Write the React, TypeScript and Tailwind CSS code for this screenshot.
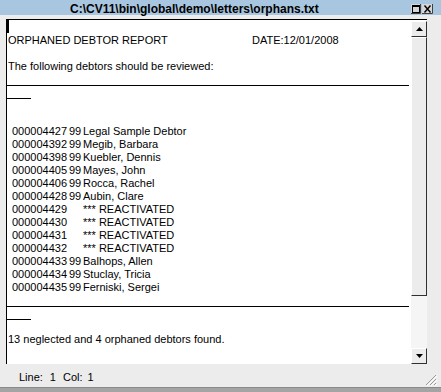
import React from 'react';

const rows: [string, string | null, string][] = [
    ['000004427', '99', 'Legal Sample Debtor'],
    ['000004392', '99', 'Megib, Barbara'],
    ['000004398', '99', 'Kuebler, Dennis'],
    ['000004405', '99', 'Mayes, John'],
    ['000004406', '99', 'Rocca, Rachel'],
    ['000004428', '99', 'Aubin, Clare'],
    ['000004429', null, '*** REACTIVATED'],
    ['000004430', null, '*** REACTIVATED'],
    ['000004431', null, '*** REACTIVATED'],
    ['000004432', null, '*** REACTIVATED'],
    ['000004433', '99', 'Balhops, Allen'],
    ['000004434', '99', 'Stuclay, Tricia'],
    ['000004435', '99', 'Ferniski, Sergei'],
];

const Rule = ({ long }: { long?: boolean }) => (
    <div className="h-[13px] pt-[12px]">
        <div className={`h-px bg-black ${long ? 'w-[402px]' : 'w-[24px]'}`} />
    </div>
);

const Blank = () => <div className="h-[13px]" />;

const Arrow = ({ down }: { down?: boolean }) => (
    <svg width="7" height="4" viewBox="0 0 7 4">
        <path d={down ? 'M0 0H7L3.5 4Z' : 'M0 4H7L3.5 0Z'} fill="#000" />
    </svg>
);

const ScrollButton = ({ down }: { down?: boolean }) => (
    <div className="h-[16px] flex items-center justify-center bg-[#ececec] border border-t-white border-l-white border-r-[#303030] border-b-[#303030]">
        <Arrow down={down} />
    </div>
);

export default function App() {
    return (
        <div className="w-[441px] h-[392px] bg-[#ececec] flex flex-col font-['Liberation_Sans',Arial,sans-serif] text-black overflow-hidden">
            {/* title bar */}
            <div className="h-[15px] shrink-0 bg-[#a8c6df] flex items-start">
                <div className="flex-1 pl-[70px] pt-[1px] text-[12px] leading-[16px] font-bold whitespace-pre">
                    {'C:\\CV11\\bin\\global\\demo\\letters\\orphans.txt'}
                </div>
                <div className="flex gap-[1px] mt-[4px] mr-[8px]">
                    <svg width="10" height="10" viewBox="0 0 10 10">
                        <rect x="0" y="0" width="10" height="10" fill="#d6d6d6" />
                        <rect x="1.5" y="1.5" width="7" height="7" fill="none" stroke="#000" />
                        <rect x="1" y="1" width="8" height="2" fill="#000" />
                        <path d="M0 9.5H9.5V0" stroke="#404040" fill="none" />
                    </svg>
                    <svg width="11" height="10" viewBox="0 0 11 10">
                        <rect x="0" y="0" width="11" height="10" fill="#d6d6d6" />
                        <path d="M2.5 1.5L8.5 8.5M8.5 1.5L2.5 8.5" stroke="#000" strokeWidth="1.4" />
                        <path d="M0 9.5H10.5V0" stroke="#404040" fill="none" />
                    </svg>
                </div>
            </div>

            <div className="h-[4px] shrink-0" />

            {/* editor */}
            <div className="flex shrink-0 ml-[6px] w-[421px] h-[345px] bg-white border-t border-l border-black">
                <div className="relative flex-1 pt-[1px] text-[11px] leading-[13px] whitespace-pre overflow-hidden">
                    <div className="absolute left-0 top-0 w-[2px] h-[13px] bg-black" />
                    <Blank />
                    <div className="flex">
                        <span className="w-[245px] pl-[1px]">ORPHANED DEBTOR REPORT</span>
                        <span>DATE:12/01/2008</span>
                    </div>
                    <Blank />
                    <div className="pl-[1px]">The following debtors should be reviewed:</div>
                    <Rule long />
                    <Rule />
                    <Blank />
                    <Blank />
                    {rows.map(([num, code, name]) => (
                        <div key={num} className="flex pl-[5px]">
                            <span className="w-[57px]">{num}</span>
                            {code ? (
                                <>
                                    <span className="w-[14px]">{code}</span>
                                    <span>{name}</span>
                                </>
                            ) : (
                                <span className="ml-[14px]">{name}</span>
                            )}
                        </div>
                    ))}
                    <Rule long />
                    <Rule />
                    <Blank />
                    <div className="pl-[1px]">13 neglected and 4 orphaned debtors found.</div>
                </div>

                {/* scrollbar */}
                <div className="w-[16px] flex flex-col pt-[1px]">
                    <ScrollButton />
                    <div className="h-[259px] bg-[#ececec] border border-t-white border-l-white border-r-[#303030] border-b-[#303030]" />
                    <div className="flex-1 bg-[#f5f5f5]" />
                    <ScrollButton down />
                </div>
            </div>

            {/* status bar */}
            <div className="relative flex-1 flex text-[11px] leading-[13px] pt-[7px] pl-[19px]">
                <span>Line:</span>
                <span className="ml-[7px]">1</span>
                <span className="ml-[7px]">Col:</span>
                <span className="ml-[5px]">1</span>
                <svg className="absolute right-[4px] bottom-[1px]" width="12" height="12" viewBox="0 0 12 12">
                    <path d="M11 1L1 11M11 5L5 11M11 9L9 11" stroke="#9a9a9a" strokeWidth="1" />
                    <path d="M12 2L2 12M12 6L6 12M12 10L10 12" stroke="#ffffff" strokeWidth="1" />
                </svg>
            </div>

            <div className="h-[5px] shrink-0 bg-[#a4a4a4] border-t border-[#8a8a8a]" />
        </div>
    );
}
